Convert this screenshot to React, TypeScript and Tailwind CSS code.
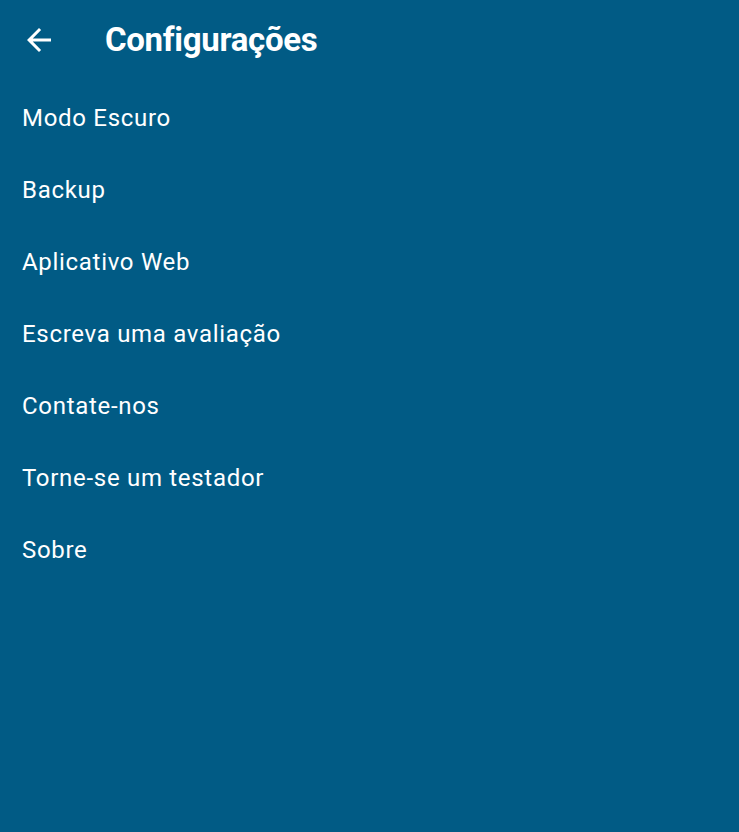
import React from "react";

const items = [
  "Modo Escuro",
  "Backup",
  "Aplicativo Web",
  "Escreva uma avaliação",
  "Contate-nos",
  "Torne-se um testador",
  "Sobre",
];

export default function App() {
  return (
    <div
      className="w-[739px] h-[832px] bg-[#015b85] text-white overflow-hidden"
      style={{ fontFamily: "Roboto, 'Noto Sans', sans-serif" }}
    >
      <div className="h-20 flex items-center">
        <div className="w-[78px] flex items-center pl-[21px]">
          <svg width="36" height="36" viewBox="0 0 24 24" fill="white">
            <path d="M20 11H7.83l5.59-5.59L12 4l-8 8 8 8 1.41-1.41L7.83 13H20v-2z" />
          </svg>
        </div>
        <div className="pl-[27px] text-[33px] font-bold tracking-[-0.3px]">Configurações</div>
      </div>
      <div className="flex flex-col pt-[2px]">
        {items.map((t) => (
          <div key={t} className="h-[72px] flex items-center pl-[22px] text-[24px] tracking-[0.7px]">
            {t}
          </div>
        ))}
      </div>
    </div>
  );
}
